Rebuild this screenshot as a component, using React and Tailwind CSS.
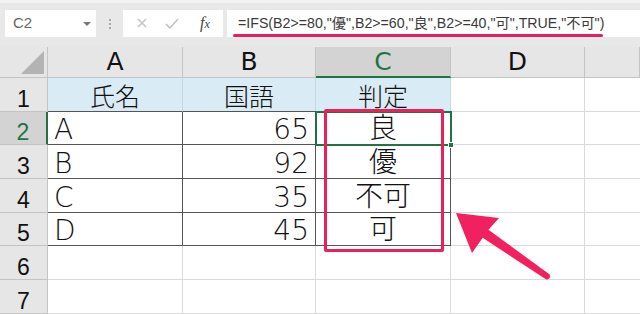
import React from 'react';

const cols = ['A', 'B', 'C', 'D', ''];
const rows = [
  ['氏名', '国語', '判定'],
  ['A', '65', '良'],
  ['B', '92', '優'],
  ['C', '35', '不可'],
  ['D', '45', '可'],
  ['', '', ''],
  ['', '', ''],
];

const cellFont = { fontFamily: '"DejaVu Sans", "Noto Sans CJK JP", sans-serif' };

function Toolbar() {
  return (
    <div className="relative h-[47px] bg-[#e8e8e8] border-t-[3px] border-[#f3f3f3]">
      <div className="flex items-center pt-[7px]">
        {/* name box */}
        <div className="ml-[5px] w-[91px] h-[27px] bg-white flex items-center justify-between pl-[8px] pr-[5px]">
          <span className="text-[15px] text-[#666]" style={{ fontFamily: '"Liberation Sans", sans-serif' }}>C2</span>
          <span className="w-0 h-0 border-l-[4px] border-r-[4px] border-t-[4px] border-l-transparent border-r-transparent border-t-[#777]" />
        </div>
        <div className="w-[27px] flex flex-col items-center gap-[2px]">
          <span className="w-[2px] h-[2px] bg-[#aaa]" />
          <span className="w-[2px] h-[2px] bg-[#aaa]" />
          <span className="w-[2px] h-[2px] bg-[#aaa]" />
        </div>
        {/* cancel / enter / fx */}
        <div className="w-[100px] h-[27px] bg-white flex items-center">
          <svg width="100" height="27" viewBox="0 0 100 27">
            <path d="M15 9 L23 17 M23 9 L15 17" stroke="#c4c4c4" strokeWidth="1.6" />
            <path d="M43 14 L47 18 L55 9" stroke="#c4c4c4" strokeWidth="1.6" fill="none" />
          </svg>
          <span className="absolute left-[200px] top-[12px] text-[16px] italic text-[#444] leading-none" style={{ fontFamily: '"Liberation Serif", serif' }}>
            f<span className="text-[12px]">x</span>
          </span>
        </div>
        {/* formula */}
        <div className="ml-[4px] flex-1 h-[27px] bg-white flex items-center pl-[11px]">
          <span className="text-[14.2px] text-[#3a3a3a] whitespace-nowrap" style={{ fontFamily: '"Liberation Sans", "Noto Sans CJK JP", sans-serif' }}>
            =IFS(B2&gt;=80,"優",B2&gt;=60,"良",B2&gt;=40,"可",TRUE,"不可")
          </span>
        </div>
      </div>
      <div className="absolute left-[233px] top-[31px] w-[370px] h-[3px] rounded-full bg-[#e2215f]" />
    </div>
  );
}

function Sheet() {
  const rowH = [34, 33, 34, 34, 33, 34, 34];
  return (
    <div
      className="grid"
      style={{ gridTemplateColumns: '48px 135px 133px 135px 134px 1fr', gridTemplateRows: `31px ${rowH.map((h) => h + 'px').join(' ')}` }}
    >
      {/* header row */}
      <div className="bg-[#e6e6e6] border-r border-b border-[#c4c4c4] relative">
        <svg className="absolute right-[3px] bottom-[3px]" width="23" height="23" viewBox="0 0 23 23">
          <path d="M23 0 L23 23 L0 23 Z" fill="#b3b3b3" />
        </svg>
      </div>
      {cols.map((c, i) => (
        <div
          key={c + i}
          className={
            c === 'C'
              ? 'bg-[#d3d3d3] border-r border-[#c4c4c4] border-b-2 border-b-[#217346] flex items-center justify-center text-[25px] text-[#217346]'
              : 'bg-[#e6e6e6] border-r border-b border-[#c4c4c4] flex items-center justify-center text-[25px] text-[#111]'
          }
          style={cellFont}
        >
          {c}
        </div>
      ))}

      {rows.map((r, ri) => {
        const n = ri + 1;
        const inTable = n <= 5;
        const head = n === 1;
        return (
          <React.Fragment key={n}>
            <div
              className={
                n === 2
                  ? 'bg-[#d3d3d3] border-r-2 border-r-[#217346] border-b border-b-[#c4c4c4] flex items-end justify-center leading-none text-[23px] text-[#217346]'
                  : 'bg-[#e6e6e6] border-r border-b border-[#c4c4c4] flex items-end justify-center leading-none text-[23px] text-[#111]'
              }
              style={{ fontFamily: '"Liberation Sans", sans-serif' }}
            >
              {n}
            </div>
            {r.map((v, ci) => (
              <div
                key={ci}
                className={[
                  'flex items-end leading-none border-b border-r font-light',
                  head ? 'bg-[#d9ebf4] justify-center text-[25px] text-[#111] pb-[1px]' : 'bg-white text-[28px] text-[#111]',
                  !head && ci === 0 ? 'justify-start pl-[6px]' : '',
                  !head && ci === 1 ? 'justify-end pr-[6px]' : '',
                  !head && ci === 2 ? 'justify-center text-[25px] pb-[1px]' : '',
                  inTable ? 'border-b-[#555]' : 'border-b-[#dadada]',
                  inTable && !head ? 'border-r-[#555]' : head ? 'border-r-[#c9d7de]' : 'border-r-[#dadada]',
                ].join(' ')}
                style={cellFont}
              >
                {v}
              </div>
            ))}
            <div className="border-b border-r border-[#dadada] bg-white" />
            <div className="border-b border-[#dadada] bg-white" />
          </React.Fragment>
        );
      })}
    </div>
  );
}

export default function App() {
  return (
    <div className="relative w-[640px] h-[314px] overflow-hidden bg-white">
      <Toolbar />
      <Sheet />

      {/* active cell C2 */}
      <div className="absolute left-[315px] top-[111px] w-[137px] h-[35px] border-2 border-[#217346]" />
      <div className="absolute left-[448px] top-[142px] w-[6px] h-[6px] bg-[#217346] border border-white" />

      {/* red highlight */}
      <div className="absolute left-[324px] top-[109px] w-[120px] h-[143px] border-[3px] border-[#e8215b] rounded-[2px]" />

      {/* arrow */}
      <svg className="absolute left-0 top-0 pointer-events-none" width="640" height="314" viewBox="0 0 640 314">
        <path
          d="M456 213 L499 218 L488.5 229.8 L549.7 274.5 Q551 279 546.3 279.5 L482.7 237.8 L472 253 Z"
          fill="#f0215e"
        />
      </svg>
    </div>
  );
}
